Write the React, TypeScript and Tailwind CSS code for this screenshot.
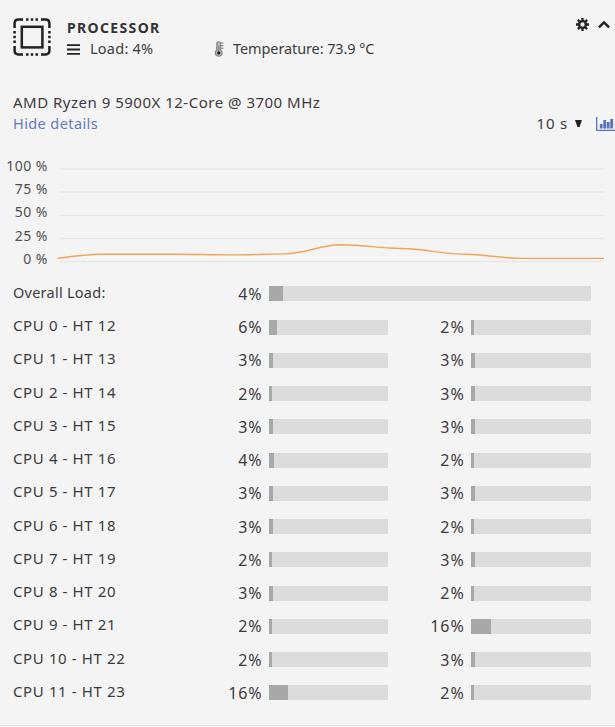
import { ReactNode } from 'react'

interface BarProps {
  value: number
  width: number
}

interface CoreRow {
  label: string
  first: BarProps
  second: BarProps
}

const cores: CoreRow[] = [
  { label: 'CPU 0 - HT 12', first: { value: 6, width: 7.5 }, second: { value: 2, width: 2.5 } },
  { label: 'CPU 1 - HT 13', first: { value: 3, width: 3.5 }, second: { value: 3, width: 4 } },
  { label: 'CPU 2 - HT 14', first: { value: 2, width: 2.5 }, second: { value: 3, width: 4 } },
  { label: 'CPU 3 - HT 15', first: { value: 3, width: 3.5 }, second: { value: 3, width: 4 } },
  { label: 'CPU 4 - HT 16', first: { value: 4, width: 5 }, second: { value: 2, width: 2.5 } },
  { label: 'CPU 5 - HT 17', first: { value: 3, width: 3.5 }, second: { value: 3, width: 4 } },
  { label: 'CPU 6 - HT 18', first: { value: 3, width: 3.5 }, second: { value: 2, width: 2.5 } },
  { label: 'CPU 7 - HT 19', first: { value: 2, width: 2.5 }, second: { value: 3, width: 4 } },
  { label: 'CPU 8 - HT 20', first: { value: 3, width: 3.5 }, second: { value: 2, width: 2.5 } },
  { label: 'CPU 9 - HT 21', first: { value: 2, width: 2.5 }, second: { value: 16, width: 20 } },
  { label: 'CPU 10 - HT 22', first: { value: 2, width: 2.5 }, second: { value: 3, width: 4 } },
  { label: 'CPU 11 - HT 23', first: { value: 16, width: 18.5 }, second: { value: 2, width: 2.5 } },
]

const ticks = ['100 %', '75 %', '50 %', '25 %', '0 %']

function Bar({ width }: { width: number }) {
  return (
    <div className="h-[15px] w-full bg-[#dcdcdc]">
      <div className="h-full bg-[#a8a8a8]" style={{ width }} />
    </div>
  )
}

function Row({ label, wide, children }: { label: string; wide?: boolean; children: ReactNode }) {
  return (
    <div className="flex h-[33.25px] items-center pl-[13px]">
      <span className={`w-[196px] shrink-0 pb-[4px] leading-5 ${wide ? 'text-[15px] tracking-[0.62px]' : 'text-[14.5px] tracking-[0.25px]'}`}>
        {label}
      </span>
      {children}
    </div>
  )
}

function Percent({ value }: { value: number }) {
  return (
    <span className="w-[53.5px] shrink-0 text-right text-[16px] leading-5 tracking-[0.9px]">{value}%</span>
  )
}

function ChipIcon() {
  return (
    <svg className="h-[38px] w-[38px]" viewBox="0 0 38 38" fill="none" stroke="#222">
      <g strokeWidth="2.5">
        <path d="M1.6 10V5.5Q1.6 1.6 5.5 1.6H10M28 1.6h4.5q3.9 0 3.9 3.9V10M36.4 28v4.5q0 3.9-3.9 3.9H28M10 36.4H5.5q-3.9 0-3.9-3.9V28" />
        <path d="M13 1.6h12M13 36.4h12M1.6 13v12M36.4 13v12" strokeDasharray="2.5 2.25" />
      </g>
      <rect x="8.8" y="8.8" width="20.6" height="20.6" strokeWidth="2.5" />
    </svg>
  )
}

function ThermometerIcon() {
  return (
    <svg className="h-4 w-3" viewBox="0 0 12 16" fill="none">
      <path d="M2.8 9V2.8a1.9 1.9 0 0 1 3.8 0V9a3.4 3.4 0 1 1-3.8 0Z" fill="#bbb" stroke="#888" strokeWidth="1.3" />
      <path d="M4.7 4.5V12" stroke="#888" strokeWidth="1.3" />
      <circle cx="4.7" cy="11.9" r="1.7" fill="#222" />
      <path d="M7 2h2.5M7 4.6h2.5M7 7.2h2.5" stroke="#777" />
    </svg>
  )
}

function GearIcon() {
  return (
    <svg className="h-[13px] w-[13px]" viewBox="0 0 13 13" fill="none" stroke="#222">
      <circle cx="6.5" cy="6.5" r="3.4" strokeWidth="2.4" />
      <path d="M6.5 0v2.5M6.5 10.5V13M0 6.5h2.5M10.5 6.5H13M1.9 1.9l1.8 1.8M9.3 9.3l1.8 1.8M11.1 1.9 9.3 3.7M3.7 9.3l-1.8 1.8" strokeWidth="2.3" />
    </svg>
  )
}

function LoadChart() {
  return (
    <div className="flex h-[119px]">
      <div className="flex w-12 shrink-0 flex-col text-right text-[14px] tracking-[0.5px] text-[#505050]">
        {ticks.map((tick) => (
          <span key={tick} className="h-[23.2px] leading-[23px] whitespace-nowrap">{tick}</span>
        ))}
      </div>
      <svg className="h-[119px] w-[567px]" viewBox="48 154 567 119" fill="none">
        <path d="M60 169H604M60 192H604M60 215.3H604M60 238.5H604M60 261.5H604" stroke="#e6e6e6" strokeWidth="1.3" />
        <path
          d="M57.5 258.2C70 257 84 254.4 100 254.2H175C195 254.3 215 255 235 254.9C252 254.8 274 254 285 253.9C306 253.3 320 245.2 340 244.8C362 245 378 247.6 390 248C402 248.7 410 248.6 421 249.8C432 251 439 252.5 450 253.4C460 254.2 473 254.4 482 255.2C495 256.3 507 258.4 520 258.4H604"
          stroke="#f0a658"
          strokeWidth="1.4"
        />
      </svg>
    </div>
  )
}

export default function App() {
  return (
    <div className="h-[727px] w-[615px] overflow-hidden bg-[#f4f4f4] font-['Noto_Sans','Open_Sans',sans-serif] text-[#3c3c3c]">
      <header className="flex h-[92px] pt-[18px] pl-[13px]">
        <ChipIcon />
        <div className="ml-4 grow">
          <h1 className="text-sm leading-5 font-bold tracking-[1.35px] text-[#333]">PROCESSOR</h1>
          <div className="flex h-[22px] items-center text-[14.5px]">
            <svg className="h-[11px] w-[13px]" viewBox="0 0 13 11" stroke="#222" strokeWidth="1.8">
              <path d="M0 1.2h13M0 5.5h13M0 9.8h13" />
            </svg>
            <span className="ml-2.5 w-[124px] tracking-[0.25px]">Load: 4%</span>
            <ThermometerIcon />
            <span className="ml-[7px] tracking-[-0.1px]">Temperature: 73.9 °C</span>
          </div>
        </div>
        <div className="flex h-[13px] items-center gap-[9px] pr-[5px]">
          <GearIcon />
          <svg className="h-[9px] w-3" viewBox="0 0 12 9" fill="none" stroke="#222" strokeWidth="2.5">
            <path d="M.9 7.4 6 2.4l5.1 5" />
          </svg>
        </div>
      </header>

      <section className="h-[62px] pl-[13px] leading-[21px]">
        <p className="text-[15px] tracking-[0.5px]">AMD Ryzen 9 5900X 12-Core @ 3700 MHz</p>
        <div className="flex items-center text-[14.5px]">
          <a className="grow tracking-[0.4px] text-[#667bbb]">Hide details</a>
          <span className="text-[15px] tracking-[0.8px]">10 s</span>
          <svg className="ml-[7px] h-[7px] w-[7px]" viewBox="0 0 7 7">
            <path d="M0 0h7L4.5 7h-2Z" fill="#222" />
          </svg>
          <svg className="ml-[14px] h-[14px] w-[19px]" viewBox="0 0 19 14" fill="none" stroke="#5872b8">
            <path d="M.7 0v13.3H19" strokeWidth="1.3" />
            <path d="M5.2 7v4.5M8.7 3v8.5M12.2 5v6.5M15.7 2v9.5" strokeWidth="2.8" />
          </svg>
        </div>
      </section>

      <LoadChart />

      <main className="h-[453px] border-b border-[#e3e3e3] pt-[4.2px]">
        <Row label="Overall Load:">
          <Percent value={4} />
          <div className="ml-[6.9px] w-[322px]"><Bar width={13.5} /></div>
        </Row>
        {cores.map(({ label, first, second }) => (
          <Row key={label} label={label} wide>
            <Percent value={first.value} />
            <div className="ml-[6.9px] w-[118.5px]"><Bar width={first.width} /></div>
            <div className="ml-[23.2px] flex items-center">
              <Percent value={second.value} />
              <div className="ml-[6.9px] w-[119.5px]"><Bar width={second.width} /></div>
            </div>
          </Row>
        ))}
      </main>
    </div>
  )
}
